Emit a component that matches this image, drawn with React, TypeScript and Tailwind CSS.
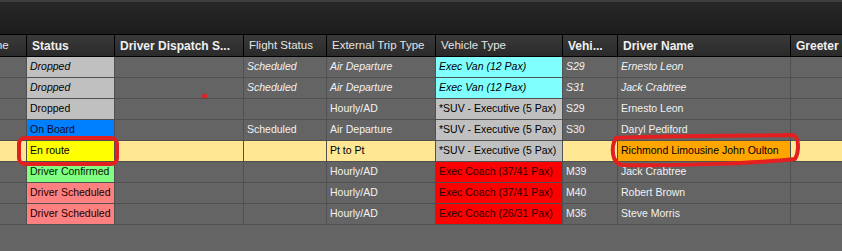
import React from 'react';

type Cell = { text?: string; bg?: string; fg?: string };
type Row = { italic?: boolean; rowBg?: string; cells: Cell[] };

const COL_W = [
  'w-[27px]',
  'w-[88px]',
  'w-[129px]',
  'w-[83px]',
  'w-[109px]',
  'w-[127px]',
  'w-[55px]',
  'w-[173px]',
  'w-[120px]',
];

const HEADERS = [
  { text: 'Name', bold: false, clip: true },
  { text: 'Status', bold: true },
  { text: 'Driver Dispatch S...', bold: true },
  { text: 'Flight Status', bold: false },
  { text: 'External Trip Type', bold: false },
  { text: 'Vehicle Type', bold: false },
  { text: 'Vehi...', bold: true },
  { text: 'Driver Name', bold: true },
  { text: 'Greeter', bold: true },
];

const dropped = { bg: 'bg-[#c0c0c0]', fg: 'text-black' };
const cyan = { bg: 'bg-[#80ffff]', fg: 'text-black' };
const suv = { bg: 'bg-[#c0c0c0]', fg: 'text-black' };
const coach = { bg: 'bg-[#ff0000]', fg: 'text-[#2a0000]' };
const sched = { bg: 'bg-[#ff8080]', fg: 'text-[#1a0000]' };

const ROWS: Row[] = [
  {
    italic: true,
    cells: [
      {},
      { text: 'Dropped', ...dropped },
      {},
      { text: 'Scheduled' },
      { text: 'Air Departure' },
      { text: 'Exec Van (12 Pax)', ...cyan },
      { text: 'S29' },
      { text: 'Ernesto Leon' },
      {},
    ],
  },
  {
    italic: true,
    cells: [
      {},
      { text: 'Dropped', ...dropped },
      {},
      { text: 'Scheduled' },
      { text: 'Air Departure' },
      { text: 'Exec Van (12 Pax)', ...cyan },
      { text: 'S31' },
      { text: 'Jack Crabtree' },
      {},
    ],
  },
  {
    cells: [
      {},
      { text: 'Dropped', ...dropped },
      {},
      {},
      { text: 'Hourly/AD' },
      { text: '*SUV - Executive (5 Pax)', ...suv },
      { text: 'S29' },
      { text: 'Ernesto Leon' },
      {},
    ],
  },
  {
    cells: [
      {},
      { text: 'On Board', bg: 'bg-[#0080ff]', fg: 'text-[#0a0a30]' },
      {},
      { text: 'Scheduled' },
      { text: 'Air Departure' },
      { text: '*SUV - Executive (5 Pax)', ...suv },
      { text: 'S30' },
      { text: 'Daryl Pediford' },
      {},
    ],
  },
  {
    rowBg: 'bg-[#ffe794]',
    cells: [
      {},
      { text: 'En route', bg: 'bg-[#ffff00]', fg: 'text-black' },
      {},
      {},
      { text: 'Pt to Pt', fg: 'text-black' },
      { text: '*SUV - Executive (5 Pax)', ...suv },
      {},
      { text: 'Richmond Limousine John Oulton', bg: 'bg-[#ffa500]', fg: 'text-black' },
      {},
    ],
  },
  {
    cells: [
      {},
      { text: 'Driver Confirmed', bg: 'bg-[#80ff80]', fg: 'text-[#002000]' },
      {},
      {},
      { text: 'Hourly/AD' },
      { text: 'Exec Coach (37/41 Pax)', ...coach },
      { text: 'M39' },
      { text: 'Jack Crabtree' },
      {},
    ],
  },
  {
    cells: [
      {},
      { text: 'Driver Scheduled', ...sched },
      {},
      {},
      { text: 'Hourly/AD' },
      { text: 'Exec Coach (37/41 Pax)', ...coach },
      { text: 'M40' },
      { text: 'Robert Brown' },
      {},
    ],
  },
  {
    cells: [
      {},
      { text: 'Driver Scheduled', ...sched },
      {},
      {},
      { text: 'Hourly/AD' },
      { text: 'Exec Coach (26/31 Pax)', ...coach },
      { text: 'M36' },
      { text: 'Steve Morris' },
      {},
    ],
  },
];

const font = { fontFamily: '"Liberation Sans", Arial, sans-serif' };

const App = () => {
  return (
    <div
      className="relative w-[842px] h-[251px] overflow-hidden bg-[#646464] select-none"
      style={font}
    >
      {/* toolbar strip */}
      <div className="h-[34px] border-t-2 border-[#3e3e3e] bg-gradient-to-b from-[#272727] to-[#1d1d1d]" />

      {/* header */}
      <div className="flex h-[23px] border-y border-black bg-gradient-to-b from-[#3a3a3a] to-[#2a2a2a] whitespace-nowrap">
        {HEADERS.map((h, i) => (
          <div
            key={i}
            className={`${COL_W[i]} shrink-0 h-full border-r border-black flex items-center overflow-hidden ${
              h.clip ? 'pl-0' : 'pl-[5px]'
            } ${h.bold ? 'font-bold text-[12px] text-[#f0f0f0]' : 'text-[11.5px] text-[#e4e4e4]'}`}
          >
            {h.clip ? <span className="-ml-[22px]">{h.text}</span> : h.text}
          </div>
        ))}
      </div>

      {/* rows */}
      {ROWS.map((row, r) => (
        <div
          key={r}
          className={`flex h-[21px] border-b border-[#505050] whitespace-nowrap text-[10.5px] ${
            row.italic ? 'italic' : ''
          } ${row.rowBg ?? ''}`}
        >
          {row.cells.map((c, i) => (
            <div
              key={i}
              className={`${COL_W[i]} shrink-0 h-full border-r border-[#505050] flex items-center px-[3px] overflow-hidden ${
                c.bg ?? ''
              } ${c.fg ?? 'text-[#f2f2f2]'}`}
            >
              {c.text}
            </div>
          ))}
        </div>
      ))}

      {/* red markup drawn over the grid */}
      <svg
        className="absolute inset-0 pointer-events-none"
        width="842"
        height="251"
        viewBox="0 0 842 251"
      >
        <rect x="19" y="138" width="98" height="26" rx="6" fill="none" stroke="#e41f1f" strokeWidth="4" />
        <path
          d="M616 138 C640 136 720 136 792 135 C800 136 799 152 795 159 C760 163 680 166 622 165 C611 163 611 146 616 138 Z"
          fill="none"
          stroke="#e41f1f"
          strokeWidth="4"
          strokeLinejoin="round"
        />
        <circle cx="204.5" cy="96" r="2.5" fill="#e41f1f" />
      </svg>
    </div>
  );
};

export default App;
